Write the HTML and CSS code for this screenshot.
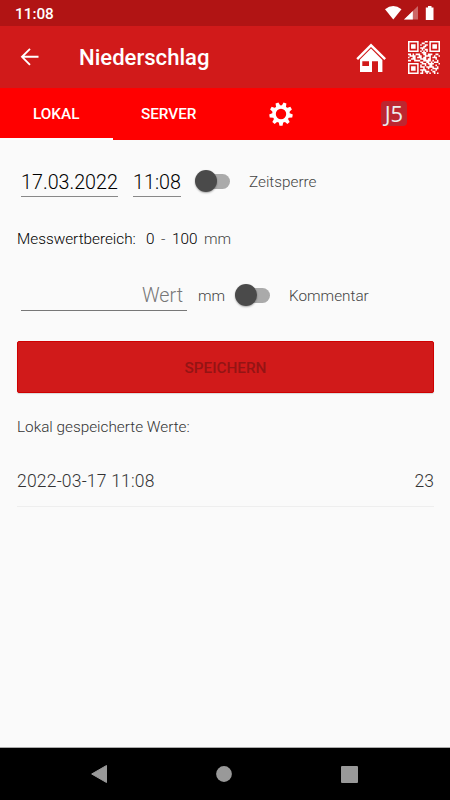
FILE: index.html
```html
<!DOCTYPE html>
<html lang="de">
<head>
<meta charset="utf-8">
<title>Niederschlag</title>
<link rel="stylesheet" href="styles.css">
</head>
<body>
<div class="status">
  <span class="clock">11:08</span>
  <svg width="52" height="16" viewBox="384 5 52 16" fill="#fff">
    <path d="M385 9.2Q393.200 2.800 401.500 9.200L393.300 19.400Z"/>
    <path d="M404 19.500L418 6V19.500Z" opacity=".35"/>
    <path d="M404 19.500L412.800 11V19.500Z"/>
    <path d="M428 6h3.500v1.600h2V20h-7.700V7.600h2.200Z"/>
  </svg>
</div>
<header class="appbar">
  <svg class="back" width="20" height="18" viewBox="0 0 20 18" fill="none" stroke="#fff" stroke-width="1.900"><path d="M18.500 8.800H2M10 .8L2 8.800l8 8"/></svg>
  <h1>Niederschlag</h1>
  <svg class="home" width="30" height="30" viewBox="356 43 30 30" fill="#fff">
    <path d="M356.300 58.200L371 43.400 386 58.200 384.300 60 371 47 358 60Z"/>
    <path fill-rule="evenodd" d="M371 48.500L382.400 60V72H378V61.200H372V72H360V59.500ZM362.300 61.200V66H369V61.200Z"/>
  </svg>
  <svg class="qr" width="32" height="33" viewBox="0 0 21 21" preserveAspectRatio="none" fill="none" stroke="#fff">
    <path d="M.5.5h6v6h-6ZM14.500.5h6v6h-6ZM.5 14.500h6v6h-6Z"/>
    <path fill="#fff" stroke="none" d="M2 2h3v3H2ZM16 2h3v3h-3ZM2 16h3v3H2Z"/>
    <path d="M11 .5h2M9 1.500h2M8 2.500h1M11 2.500h2M10 3.500h2M8 4.500h3M9 5.500h1M11 5.500h2M8 6.500h1M10 6.500h1M12 6.500h1M9 7.500h3M0 8.500h2M3 8.500h1M5 8.500h3M10 8.500h2M13 8.500h3M18 8.500h2M1 9.500h4M7 9.500h2M11 9.500h4M17 9.500h1M20 9.500h1M0 10.500h1M3 10.500h2M6 10.500h3M10 10.500h2M14 10.500h1M16 10.500h3M2 11.500h3M8 11.500h4M13 11.500h2M18 11.500h1M0 12.500h2M4 12.500h4M10 12.500h5M16 12.500h1M19 12.500h1M8 13.500h2M12 13.500h2M15 13.500h1M17 13.500h3M9 14.500h3M13 14.500h4M20 14.500h1M8 15.500h1M11 15.500h1M14 15.500h2M18 15.500h1M8 16.500h3M12 16.500h5M19 16.500h1M10 17.500h1M13 17.500h1M16 17.500h4M8 18.500h4M15 18.500h1M18 18.500h1M9 19.500h1M11 19.500h3M16 19.500h2M8 20.500h2M12 20.500h1M14 20.500h1M17 20.500h1M19 20.500h1"/>
  </svg>
</header>
<nav class="tabs">
  <div class="tab active">LOKAL</div>
  <div class="tab">SERVER</div>
  <div class="tab">
    <svg width="24" height="24" viewBox="-12 -12 24 24" fill="#fff">
      <circle r="7" fill="none" stroke="#fff" stroke-width="3.600"/>
      <path id="tooth" d="M-2.300-8L-1.500-11.700H1.500L2.300-8Z" transform="rotate(180)"/>
      <use href="#tooth" transform="rotate(40)"/><use href="#tooth" transform="rotate(80)"/><use href="#tooth" transform="rotate(120)"/><use href="#tooth" transform="rotate(160)"/><use href="#tooth" transform="rotate(200)"/><use href="#tooth" transform="rotate(240)"/><use href="#tooth" transform="rotate(280)"/><use href="#tooth" transform="rotate(320)"/>
    </svg>
  </div>
  <div class="tab"><span class="j5">J5</span></div>
</nav>
<main>
  <div class="row when">
    <span class="field date">17.03.2022</span>
    <span class="field time">11:08</span>
    <span class="switch"></span>
    <span class="label">Zeitsperre</span>
  </div>
  <div class="row range"><span class="dark name">Messwertbereich:</span><span class="dark min">0</span><span class="dash">-</span><span class="dark max">100</span><span>mm</span></div>
  <div class="row value">
    <span class="field wert">Wert</span>
    <span class="unit">mm</span>
    <span class="switch"></span>
    <span class="label">Kommentar</span>
  </div>
  <div class="save">SPEICHERN</div>
  <div class="caption">Lokal gespeicherte Werte:</div>
  <div class="entry"><span class="stamp">2022-03-17 11:08</span><span>23</span></div>
</main>
<footer class="navbar">
  <svg width="16" height="18" viewBox="0 0 16 18"><path d="M.7 9L15.500.5v17Z" fill="#999" stroke="#999" stroke-linejoin="round"/></svg>
  <svg width="16" height="16" viewBox="0 0 16 16"><circle cx="8" cy="8" r="7.900" fill="#999"/></svg>
  <svg width="17" height="17" viewBox="0 0 17 17"><rect width="17" height="17" rx="1" fill="#999"/></svg>
</footer>
</body>
</html>
```
FILE: styles.css
```css
* { box-sizing: border-box; }
body {
  margin: 0;
  width: 450px;
  height: 800px;
  display: flex;
  flex-direction: column;
  overflow: hidden;
  background: #fafafa;
  color: #444;
  font: 300 15.3px/20px Roboto, sans-serif;
}
svg { display: block; flex: none; }
span { white-space: nowrap; }
.status {
  height: 26px;
  flex: none;
  background: #b11414;
  color: #fff;
  display: flex;
  justify-content: space-between;
  align-items: center;
  padding: 0 14px 0 15px;
}
.clock { font-weight: 500; font-size: 15.3px; padding-top: 2px; }
.appbar {
  height: 62px;
  flex: none;
  background: #d11a1a;
  color: #fff;
  display: flex;
  align-items: center;
  padding: 0 10px 0 20px;
}
h1 { margin: 0 0 0 39px; font-size: 22.1px; line-height: 28px; font-weight: 500; flex: 1; }
.qr { margin-left: 22px; }
.home { margin-top: 2px; }
.tabs { height: 52px; flex: none; background: #f00; display: flex; }
.tab {
  flex: 1;
  display: flex;
  align-items: center;
  justify-content: center;
  padding-top: 2px;
  color: #fff;
  font-weight: 500;
  border-bottom: 2px solid transparent;
}
.active { border-bottom-color: #fff; }
.j5 {
  width: 26px;
  height: 25px;
  margin-bottom: 2px;
  border-radius: 4px;
  background: #bd2630;
  color: #eee;
  font: 400 22px/24px "Open Sans", sans-serif;
  text-align: center;
  letter-spacing: -.3px;
}
main { flex: 1; padding: 24px 16px 0 17px; }
.row { display: flex; align-items: center; }
.when { height: 33px; padding-left: 4px; }
.field { color: #000; font-size: 19.7px; line-height: 24px; border-bottom: 1px solid #888; }
.when .field { height: 33px; padding-top: 7px; text-align: center; }
.date { width: 97px; margin-right: 15px; }
.time { width: 48px; margin-right: 14px; }
.switch {
  position: relative;
  width: 35px;
  height: 22px;
  flex: none;
}
.switch::before {
  content: "";
  position: absolute;
  left: 8px;
  top: 4px;
  width: 27px;
  height: 15px;
  border-radius: 8px;
  background: #aaa;
}
.switch::after {
  content: "";
  position: absolute;
  left: 0;
  top: 0;
  width: 22px;
  height: 22px;
  border-radius: 50%;
  background: #4a4a4a;
  box-shadow: 0 1px 2px #0005;
}
.label { margin-left: 19px; padding-top: 2px; }
.range { height: 20px; margin-top: 32px; }
.dark { color: #000; }
.name { width: 129px; }
.min { width: 15px; }
.dash { width: 11px; }
.max { width: 32px; }
.value { height: 32px; margin-top: 30px; padding-left: 4px; }
.wert { width: 166px; height: 32px; color: #777; text-align: right; padding: 5px 4px 0 0; border-bottom-color: #777; }
.unit { width: 37px; margin-left: 11px; padding-top: 1px; }
.save {
  height: 52px;
  margin-top: 30px;
  border: 1px solid #cf0000;
  border-radius: 2px;
  background: #d11a1a;
  color: #941414;
  font-weight: 500;
  line-height: 52px;
  text-align: center;
  box-shadow: 0 1px 1px #0002;
}
.caption { margin-top: 24px; color: #333; }
.entry {
  margin-top: 17px;
  height: 53px;
  padding-top: 1px;
  display: flex;
  justify-content: space-between;
  align-items: center;
  font-size: 17.5px;
  color: #333;
  border-bottom: 1px solid #eee;
}
.stamp { letter-spacing: .2px; }
.navbar {
  height: 53px;
  flex: none;
  background: #000;
  border-top: 1px solid #aaa;
  display: flex;
  justify-content: space-between;
  align-items: center;
  padding: 0 92px 0 91px;
}
```
